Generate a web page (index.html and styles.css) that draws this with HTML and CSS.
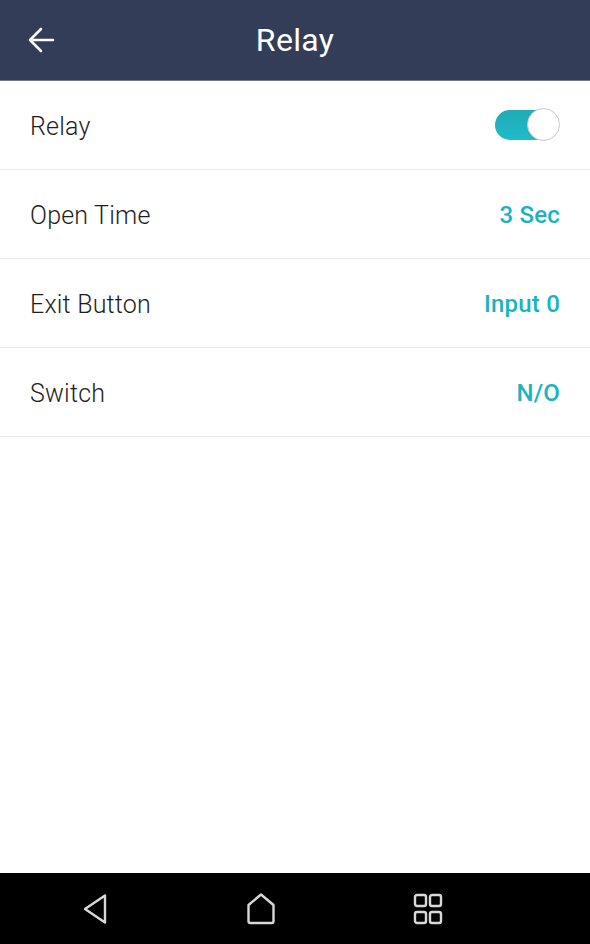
FILE: index.html
```html
<!DOCTYPE html>
<html>
<head>
<meta charset="utf-8">
<link rel="stylesheet" href="styles.css">
</head>
<body>
<div class="screen">
  <header class="topbar">
    <svg class="back" width="30" height="30" viewBox="0 0 30 30"><path d="M27 15H4M15 4L4 15l11 11" fill="none" stroke="#fff" stroke-width="2.6" stroke-linecap="round" stroke-linejoin="round"/></svg>
    <h1 class="title">Relay</h1>
  </header>
  <main class="list">
    <div class="row">
      <span class="label">Relay</span>
      <span class="toggle"><span class="knob"></span></span>
    </div>
    <div class="row">
      <span class="label">Open Time</span>
      <span class="value">3 Sec</span>
    </div>
    <div class="row">
      <span class="label">Exit Button</span>
      <span class="value">Input 0</span>
    </div>
    <div class="row">
      <span class="label">Switch</span>
      <span class="value">N/O</span>
    </div>
  </main>
  <nav class="navbar">
    <svg width="32" height="34" viewBox="0 0 32 34"><path d="M27 3.5L7 17l20 13.5z" fill="none" stroke="#d8d8d8" stroke-width="2.4" stroke-linejoin="round"/></svg>
    <svg width="32" height="34" viewBox="0 0 32 34"><path d="M16 2.5L3.5 13v16.5a1.5 1.5 0 0 0 1.5 1.5h22a1.5 1.5 0 0 0 1.5-1.5V13z" fill="none" stroke="#d8d8d8" stroke-width="2.4" stroke-linejoin="round"/></svg>
    <svg width="32" height="34" viewBox="0 0 32 34"><g fill="none" stroke="#d8d8d8" stroke-width="2.4"><rect x="3" y="3" width="11" height="11" rx="2"/><rect x="18" y="3" width="11" height="11" rx="2"/><rect x="3" y="20" width="11" height="11" rx="2"/><rect x="18" y="20" width="11" height="11" rx="2"/></g></svg>
  </nav>
</div>
</body>
</html>
```
FILE: styles.css
```css
* { box-sizing: border-box; }
html, body { margin: 0; padding: 0; }
body { font-family: Roboto, "Noto Sans", sans-serif; background: #fff; }
.screen { width: 590px; height: 944px; display: flex; flex-direction: column; }
.topbar {
  height: 81px; background: #343d57; border-bottom: 1px solid #6e7690;
  display: flex; align-items: center; justify-content: center; position: relative;
}
.back { position: absolute; left: 26px; top: 25px; }
.title { margin: 0; color: #fff; font-weight: 400; font-size: 32px; letter-spacing: 0.3px; }
.list { flex: 1; }
.row {
  height: 89px; border-bottom: 1.5px solid #ececec;
  display: flex; align-items: center; justify-content: space-between;
  padding: 2px 30px 0 30px;
}
.label { font-size: 25px; color: #1e1e1e; font-weight: 300; letter-spacing: 0.2px; }
.value { font-size: 24px; color: #19b3c2; font-weight: 500; letter-spacing: 0.2px; }
.toggle {
  width: 64px; height: 30px; border-radius: 15px; margin-right: 1px; margin-bottom: 2px;
  background: linear-gradient(#20a9b8, #21bcca);
  position: relative; display: block;
}
.knob {
  position: absolute; right: -1px; top: -2px; width: 33px; height: 33px;
  border-radius: 50%; background: #fff; border: 1.5px solid #c9c9c9;
}
.navbar {
  height: 71px; background: #000;
  display: flex; align-items: center; gap: 135px;
  padding: 0 0 0 78px;
}
```
